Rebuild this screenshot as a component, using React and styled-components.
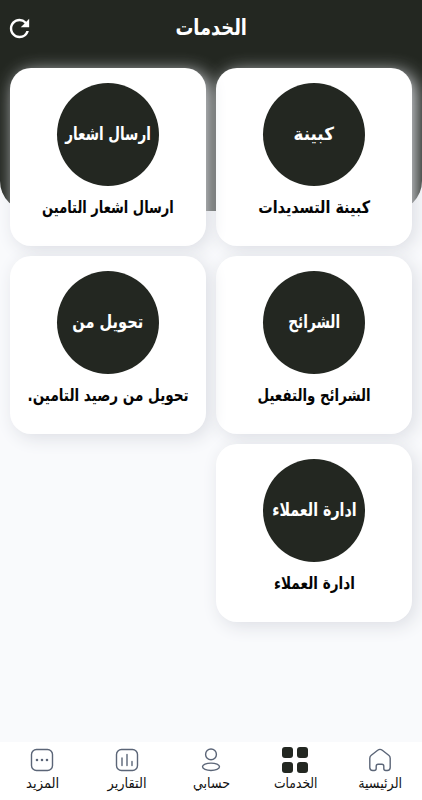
import React from "react"
import styled, { createGlobalStyle } from "styled-components"
import { MdRefresh } from "react-icons/md"

const COLORS = {
  dark: "#232721",
  page: "#f9fafc",
  icon: "#5b6577",
}

const SERVICES = [
  { id: "cabin", badge: "كبينة", badgeScale: 0.93, title: "كبينة التسديدات", scale: 0.845 },
  { id: "notify", badge: "ارسال اشعار", badgeScale: 0.75, title: "ارسال اشعار التامين", scale: 0.766 },
  { id: "sims", badge: "الشرائح", badgeScale: 0.76, title: "الشرائح والتفعيل", scale: 0.785 },
  { id: "transfer", badge: "تحويل من", badgeScale: 0.81, title: "تحويل من رصيد التامين.", scale: 0.797 },
  { id: "clients", badge: "ادارة العملاء", badgeScale: 0.79, title: "ادارة العملاء", scale: 0.8 },
]

const HomeIcon = () => (
  <LineIcon viewBox="0 0 24 24">
    <path d="M1.8 10.2c0-1.3.5-2.2 1.5-3L9.7 2.3c1.5-1.2 3.1-1.2 4.6 0l6.4 4.9c1 .8 1.5 1.7 1.5 3v9.3c0 2-1.1 3-3 3h-1.4c-1.3 0-2-.7-2-2v-2.3c0-1.3-.6-2-1.9-2h-3.8c-1.3 0-1.9.7-1.9 2v2.3c0 1.3-.7 2-2 2H4.800c-1.900 0-3-1-3-3z" />
  </LineIcon>
)

const ServicesIcon = () => (
  <SolidIcon viewBox="0 0 26 26">
    <rect x="0" y="0" width="11" height="11" rx="3" />
    <rect x="15" y="0" width="11" height="11" rx="3" />
    <rect x="0" y="15" width="11" height="11" rx="3" />
    <rect x="15" y="15" width="11" height="11" rx="3" />
  </SolidIcon>
)

const AccountIcon = () => (
  <LineIcon viewBox="0 0 24 24">
    <circle cx="12" cy="6.4" r="5.4" />
    <ellipse cx="12" cy="18.8" rx="8.5" ry="3.7" />
  </LineIcon>
)

const ReportsIcon = () => (
  <LineIcon viewBox="0 0 24 24">
    <rect x="1.5" y="1.5" width="21" height="21" rx="5" />
    <path d="M7 10v7.5M12 6.5v11M17 13.5v4" />
  </LineIcon>
)

const MoreIcon = () => (
  <LineIcon viewBox="0 0 24 24">
    <rect x="1.5" y="1.5" width="21" height="21" rx="5" />
    <path d="M7 12h.01M12 12h.01M17 12h.01" strokeWidth="2.6" />
  </LineIcon>
)

const TABS = [
  { id: "home", label: "الرئيسية", scale: 0.91, Icon: HomeIcon },
  { id: "services", label: "الخدمات", scale: 0.88, Icon: ServicesIcon },
  { id: "account", label: "حسابي", scale: 0.9, Icon: AccountIcon },
  { id: "reports", label: "التقارير", scale: 0.93, Icon: ReportsIcon },
  { id: "more", label: "المزيد", scale: 0.94, Icon: MoreIcon },
]

const App = () => (
  <>
    <GlobalStyle />
    <Screen>
      <Header>
        <Title $scale={0.81}>الخدمات</Title>
        <RefreshButton aria-label="تحديث">
          <MdRefresh size={29} />
        </RefreshButton>
      </Header>
      <ServicesGrid>
        {SERVICES.map((service) => (
          <Card key={service.id}>
            <Badge>
              <BadgeText $scale={service.badgeScale}>{service.badge}</BadgeText>
            </Badge>
            <CardTitle $scale={service.scale}>{service.title}</CardTitle>
          </Card>
        ))}
      </ServicesGrid>
      <TabBar>
        {TABS.map(({ id, label, scale, Icon }) => (
          <Tab key={id}>
            <IconSlot>
              <Icon />
            </IconSlot>
            <TabLabel $scale={scale}>{label}</TabLabel>
          </Tab>
        ))}
      </TabBar>
    </Screen>
  </>
)

export default App

const GlobalStyle = createGlobalStyle`
  * {
    box-sizing: border-box;
  }
  body {
    margin: 0;
    font-family: "DejaVu Sans", sans-serif;
  }
`

const Screen = styled.div`
  direction: rtl;
  display: flex;
  flex-direction: column;
  height: 800px;
  overflow: hidden;
  background: ${COLORS.page};
`

const Header = styled.header`
  flex: none;
  display: grid;
  grid-template-columns: 40px 1fr 40px;
  align-items: center;
  align-content: start;
  height: 211px;
  padding-top: 8px;
  background: ${COLORS.dark};
  color: #fff;
  border-radius: 0 0 30px 30px;
`

const Title = styled.h1`
  grid-column: 2;
  justify-self: center;
  margin: 0;
  font-size: 22px;
  line-height: 40px;
  white-space: nowrap;
  transform: scaleX(${(props) => props.$scale});
`

const RefreshButton = styled.button`
  display: flex;
  justify-content: flex-end;
  padding: 0 0 0 5px;
  border: 0;
  background: none;
  color: #fff;
`

const ServicesGrid = styled.main`
  flex: 1;
  display: grid;
  grid-template-columns: 196px 196px;
  grid-auto-rows: 178px;
  gap: 10px;
  align-content: start;
  margin-top: -143px;
  padding: 0 10px;
`

const Card = styled.article`
  display: flex;
  flex-direction: column;
  align-items: center;
  padding-top: 15px;
  background: #fff;
  border-radius: 21px;
  box-shadow: 4px 4px 18px #dcdee4;
`

const Badge = styled.div`
  flex: none;
  display: flex;
  align-items: center;
  justify-content: center;
  width: 102px;
  height: 103px;
  border-radius: 50%;
  background: ${COLORS.dark};
  color: #fff;
`

const BadgeText = styled.span`
  font-size: 18px;
  font-weight: 700;
  line-height: 24px;
  margin-top: -1px;
  white-space: nowrap;
  transform: scaleX(${(props) => props.$scale});
`

const CardTitle = styled.h2`
  margin: 9px 0 0;
  font-size: 17px;
  line-height: 24px;
  color: #050505;
  white-space: nowrap;
  transform: scaleX(${(props) => props.$scale});
`

const TabBar = styled.nav`
  flex: none;
  display: grid;
  grid-template-columns: repeat(5, 1fr);
  height: 58px;
  background: #fff;
`

const Tab = styled.div`
  display: flex;
  flex-direction: column;
  align-items: center;
  padding-top: 4px;
`

const IconSlot = styled.div`
  display: flex;
  align-items: center;
  justify-content: center;
  height: 27px;
`

const LineIcon = styled.svg`
  width: 24px;
  height: 24px;
  fill: none;
  stroke: ${COLORS.icon};
  stroke-width: 1.4;
  stroke-linecap: round;
  stroke-linejoin: round;
`

const SolidIcon = styled.svg`
  width: 26px;
  height: 26px;
  fill: ${COLORS.dark};
`

const TabLabel = styled.span`
  font-size: 14px;
  line-height: 20px;
  color: #111;
  white-space: nowrap;
  transform: scaleX(${(props) => props.$scale});
`
